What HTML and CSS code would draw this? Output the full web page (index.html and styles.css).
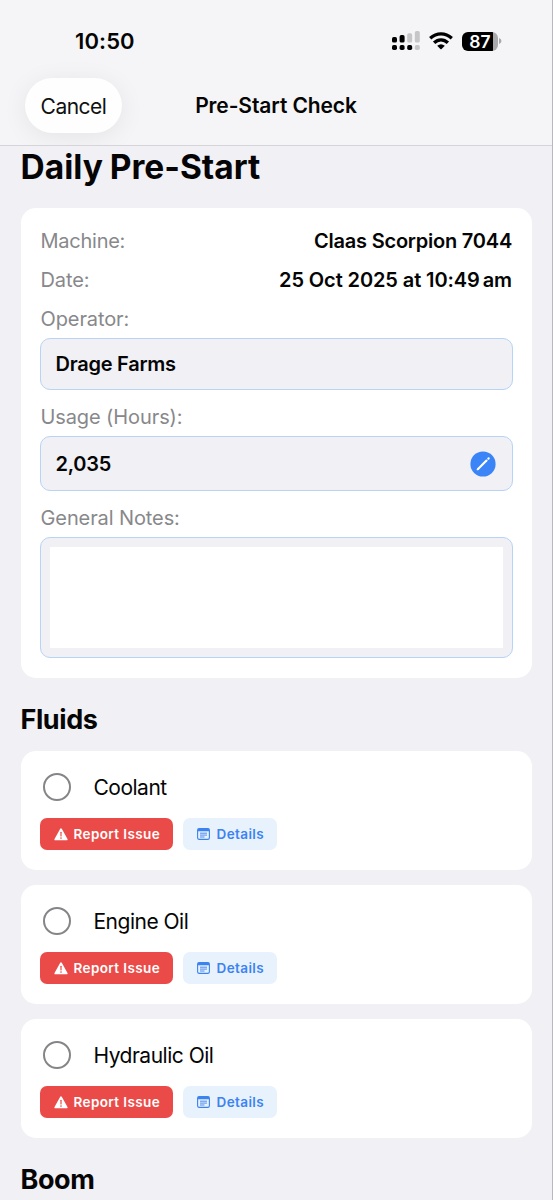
FILE: index.html
```html
<!DOCTYPE html>
<html lang="en">
<head>
<meta charset="utf-8">
<title>Pre-Start Check</title>
<link rel="stylesheet" href="styles.css">
</head>
<body>
<svg class="defs" aria-hidden="true">
  <symbol id="warning" viewBox="0 0 14 13">
    <path d="M7 1.3 12.7 11.4H1.3Z" fill="#fff" stroke="#fff" stroke-width="1.8" stroke-linejoin="round"/>
    <path d="M7 4.3V8" stroke="#eb4b48" stroke-width="1.2" stroke-linecap="round"/>
    <circle cx="7" cy="10.1" r=".8" fill="#eb4b48"/>
  </symbol>
  <symbol id="note" viewBox="0 0 13 12">
    <rect x=".6" y=".6" width="11.8" height="10.8" rx="1.7" fill="none" stroke="#3c82f1" stroke-width="1.1"/>
    <path d="M.6 3.3V2Q.6.6 2 .6H11Q12.4.6 12.4 2V3.3Z" fill="#3c82f1"/>
    <path d="M3 5.2H10M3 7.1H10M3 9H7.5" stroke="#3c82f1" stroke-width=".9"/>
  </symbol>
</svg>
<div class="screen">
  <header class="header">
    <div class="status">
      <span class="time">10:50</span>
      <div class="indicators">
        <svg class="signal" width="28" height="20" viewBox="0 0 28 20">
          <g fill="#000"><rect x="0" y="6" width="5" height="5.6" rx="1.7"/><rect x="7.6" y="4" width="5" height="7.6" rx="1.7"/><rect x="0" y="14" width="5" height="5" rx="1.7"/><rect x="7.6" y="14" width="5" height="5" rx="1.7"/><rect x="15.2" y="14" width="5" height="5" rx="1.7"/></g>
          <g fill="#c6c6c8"><rect x="15.2" y="2.2" width="5" height="9.4" rx="1.7"/><rect x="22.8" y="0" width="5" height="11.6" rx="1.7"/><rect x="22.8" y="14" width="5" height="5" rx="1.7"/></g>
        </svg>
        <svg class="wifi" width="24" height="18" viewBox="0 0 24 18">
          <g fill="none" stroke="#000" stroke-width="3.3"><path d="M1.2 6.3Q6 1.9 12 1.9T22.8 6.3"/><path d="M5.1 10.8Q8.2 7.8 12 7.8T18.9 10.8"/></g>
          <path d="M8.2 13.7Q12 10.7 15.8 13.7L12.6 17Q12 17.5 11.4 17Z"/>
        </svg>
        <div class="battery"><span class="level">87</span><svg class="cap" width="3" height="6" viewBox="0 0 3 6"><path d="M0 0Q2.5 .8 2.5 3T0 6Z" fill="#aaaaad"/></svg></div>
      </div>
    </div>
    <div class="nav">
      <button class="cancel">Cancel</button>
      <div class="nav-title">Pre-Start Check</div>
    </div>
  </header>
  <main class="content">
    <h1 class="title">Daily Pre-Start</h1>
    <section class="card info">
      <div class="row"><span class="label machine">Machine:</span><span class="value name">Claas Scorpion 7044</span></div>
      <div class="row"><span class="label">Date:</span><span class="value">25 Oct 2025 at 10:49<span class="meridiem">am</span></span></div>
      <div class="row"><span class="label">Operator:</span></div>
      <div class="field operator">Drage Farms</div>
      <div class="row usage"><span class="label">Usage (Hours):</span></div>
      <div class="field hours"><span>2,035</span>
        <svg width="26" height="26" viewBox="0 0 26 26"><circle cx="13" cy="13" r="12.6" fill="#3a84f7"/><path d="M7.8 18.2 16.5 9.5" stroke="#fff" stroke-width="2.1" stroke-linecap="round"/><path d="M6.7 19.3 7.3 17.2 8.8 18.7Z" fill="#fff"/><path d="M18.4 7.6 18.7 7.3" stroke="#fff" stroke-width="2.2" stroke-linecap="round"/></svg>
      </div>
      <div class="row notes-label"><span class="label">General Notes:</span></div>
      <div class="field notes"><div class="notes-area"></div></div>
    </section>
    <h2 class="section">Fluids</h2>
    <div class="checks">
      <article class="card check">
        <div class="item"><span class="radio"></span><span>Coolant</span></div>
        <div class="actions"><button class="btn report"><svg width="14" height="13"><use href="#warning"/></svg>Report Issue</button><button class="btn details"><svg width="13" height="12"><use href="#note"/></svg>Details</button></div>
      </article>
      <article class="card check">
        <div class="item"><span class="radio"></span><span>Engine Oil</span></div>
        <div class="actions"><button class="btn report"><svg width="14" height="13"><use href="#warning"/></svg>Report Issue</button><button class="btn details"><svg width="13" height="12"><use href="#note"/></svg>Details</button></div>
      </article>
      <article class="card check">
        <div class="item"><span class="radio"></span><span>Hydraulic Oil</span></div>
        <div class="actions"><button class="btn report"><svg width="14" height="13"><use href="#warning"/></svg>Report Issue</button><button class="btn details"><svg width="13" height="12"><use href="#note"/></svg>Details</button></div>
      </article>
    </div>
    <h2 class="section last">Boom</h2>
  </main>
</div>
</body>
</html>
```
FILE: styles.css
```css
* { box-sizing: border-box; }
body { margin: 0; font-family: Inter, "Liberation Sans", sans-serif; color: #050505; }
.defs { display: none; }
svg { display: block; flex: none; }
button { border: 0; padding: 0; font-family: inherit; }
.screen { width: 553px; height: 1200px; overflow: hidden; background: #f0f0f5; border-right: 1px solid #b9b9bd; }
.header { height: 146px; background: #f5f5f7; border-bottom: 1px solid #d4d4d9; overflow: hidden; }
.status { height: 78px; padding: 4px 50px 0 75px; display: flex; align-items: center; justify-content: space-between; }
.time { font-size: 22px; font-weight: 600; letter-spacing: 0.1px; }
.indicators { display: flex; align-items: center; }
.wifi { margin-left: 9px; }
.battery { display: flex; align-items: center; margin-left: 9px; }
.level { width: 36px; height: 19px; border-radius: 6px; background: linear-gradient(90deg, #000 31px, #aaaaad 31px); color: #fff; font-size: 17.5px; font-weight: 600; line-height: 19px; text-align: center; letter-spacing: 0; }
.cap { margin-left: 1px; }
.nav { display: grid; grid-template-columns: 1fr auto 1fr; align-items: center; }
.cancel { margin-left: 25px; width: 97px; height: 55px; padding-top: 1px; border-radius: 28px; background: #fefefe; box-shadow: 0 4px 26px rgba(0,0,0,.07); color: #111; font-size: 21px; letter-spacing: -0.5px; }
.nav-title { font-size: 21px; font-weight: 600; letter-spacing: -0.1px; line-height: 25px; }
.content { padding: 0 20px 0 20.5px; }
.title { margin: 0; height: 62px; line-height: 43px; font-size: 33.5px; font-weight: 700; letter-spacing: 0; word-spacing: -1px; }
.card { background: #fff; border-radius: 15px; }
.info { height: 470px; padding: 13px 20px 0 20px; }
.row { height: 39.3px; display: flex; align-items: center; justify-content: space-between; font-size: 20px; letter-spacing: -0.1px; }
.label { color: #88888b; }
.machine { letter-spacing: -0.25px; }
.value { font-weight: 600; }
.name { letter-spacing: -0.22px; }
.meridiem { margin-left: 3px; }
.field { margin-left: -0.5px; margin-right: -0.5px; border: 1px solid #b7d3f5; border-radius: 10px; background: #f0f0f5; font-size: 20px; font-weight: 600; letter-spacing: -0.25px; padding: 1px 16px 0 14.5px; display: flex; align-items: center; justify-content: space-between; }
.operator { height: 52px; margin-top: -1px; }
.usage { height: 46px; padding-top: 9px; }
.hours { height: 55px; }
.notes-label { height: 46px; padding-top: 8px; }
.notes { height: 121px; padding: 9px; }
.notes-area { flex: 1; align-self: stretch; background: #fff; }
.section { margin: 0; height: 73px; line-height: 84px; font-size: 27px; font-weight: 700; letter-spacing: -0.4px; }
.checks { display: grid; gap: 15px; }
.check { height: 119px; padding: 20px 20px 0 19.5px; }
.item { height: 32px; padding-left: 2.5px; display: flex; align-items: center; gap: 23px; font-size: 21px; letter-spacing: -0.5px; }
.radio { width: 28px; height: 28px; border: 2px solid #858588; border-radius: 50%; }
.actions { display: flex; gap: 10px; margin-top: 15px; }
.btn { height: 32px; border-radius: 7px; display: flex; align-items: center; font-size: 13.5px; font-weight: 600; letter-spacing: 0.4px; }
.report { width: 132.5px; padding-left: 13.5px; gap: 6px; background: #eb4b48; color: #fff; }
.details { width: 94px; padding-left: 14px; gap: 7px; background: #e7f2fd; color: #3c82f1; }
```
